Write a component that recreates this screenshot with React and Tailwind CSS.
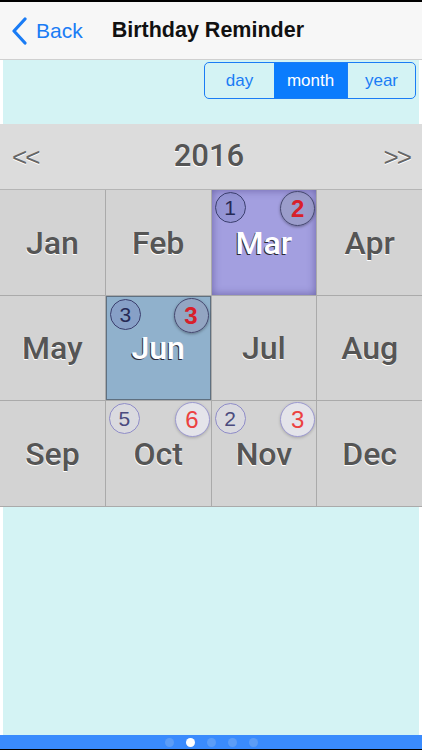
import React from "react";

const months = ["Jan","Feb","Mar","Apr","May","Jun","Jul","Aug","Sep","Oct","Nov","Dec"];
const badges = {
  Mar: { l: "1", r: "2", dark: true },
  Jun: { l: "3", r: "3", dark: true },
  Oct: { l: "5", r: "6", dark: false },
  Nov: { l: "2", r: "3", dark: false },
};

function Badge({ n, side, dark }) {
  if (side === "l") {
    return (
      <div
        className={
          "absolute left-[3px] top-[2px] w-[31px] h-[31px] rounded-full flex items-center justify-center text-[21px] leading-none " +
          (dark
            ? "border-[1.5px] border-[#3b3f6e] bg-[rgba(120,130,190,0.35)] text-[#262a56] font-medium"
            : "border border-[#8f8cc8] bg-[#dadadf] text-[#4b4b7e]")
        }
      >
        {n}
      </div>
    );
  }
  return (
    <div
      className={
        "absolute right-[1px] top-[1px] w-[35px] h-[35px] rounded-full flex items-center justify-center text-[24px] leading-none " +
        (dark
          ? "border-[1.5px] border-[#44476e] bg-[rgba(150,155,185,0.55)] text-[#d8202a] font-bold shadow-[0_1px_3px_rgba(0,0,0,0.35)]"
          : "border border-[#9d9ad0] bg-[#e4e4ea] text-[#ec4141] shadow-[0_1px_3px_rgba(0,0,0,0.2)]")
      }
    >
      {n}
    </div>
  );
}

function Cell({ m }) {
  const b = badges[m];
  let cls = "relative flex items-center justify-center ";
  let txt = "text-[#555555] [text-shadow:-0.5px_1px_0_#ffffff]";
  if (m === "Mar") {
    cls += "bg-[#a39fe0] shadow-[inset_0_0_8px_rgba(60,50,120,0.55)]";
    txt = "text-white [text-shadow:-1px_1px_0_#2a2a3a]";
  } else if (m === "Jun") {
    cls += "bg-[#90b1cc] border border-[#5f7080]";
    txt = "text-white [text-shadow:-1px_1px_0_#2a2a3a]";
  } else {
    cls += "bg-[#d3d3d3]";
  }
  return (
    <div className={cls}>
      <span
        className={"text-[32px] font-medium " + txt}
        style={{ fontFamily: 'Roboto, "Liberation Sans", sans-serif' }}
      >
        {m}
      </span>
      {b && <Badge n={b.l} side="l" dark={b.dark} />}
      {b && <Badge n={b.r} side="r" dark={b.dark} />}
    </div>
  );
}

export default function App() {
  return (
    <div
      className="w-[422px] h-[750px] bg-white flex flex-col overflow-hidden"
      style={{ fontFamily: '"Liberation Sans", Arial, sans-serif' }}
    >
      <div className="h-[2px] bg-black shrink-0" />
      <div className="h-[58px] shrink-0 bg-[#f7f7f7] border-b border-[#d0d0d0] flex items-center">
        <svg width="18" height="28" viewBox="0 0 18 28" className="ml-[11px]">
          <path d="M14 2 L3 14 L14 26" fill="none" stroke="#1a7cf5" strokeWidth="3.2" strokeLinecap="round" strokeLinejoin="round" />
        </svg>
        <span className="ml-[7px] text-[21px] text-[#1a7cf5]">Back</span>
        <span className="ml-[29px] text-[21.5px] font-bold text-[#111]">Birthday Reminder</span>
      </div>
      <div className="h-[64px] shrink-0 px-[3px]">
        <div className="h-full bg-[#d4f3f4] flex justify-end items-start pt-[2px] pr-[3px]">
          <div className="flex h-[37px] border border-[#1a7cf5] rounded-[5px] overflow-hidden text-[17px] text-[#1a7cf5]">
            <div className="w-[69px] flex items-center justify-center">day</div>
            <div className="w-[73px] flex items-center justify-center bg-[#0b7cfd] text-white">month</div>
            <div className="w-[68px] flex items-center justify-center border-l border-[#1a7cf5]">year</div>
          </div>
        </div>
      </div>
      <div className="h-[66px] shrink-0 bg-[#dcdcdc] flex items-center justify-between pl-[12px] pr-[12px] border-b border-[#b5b5b5]">
        <span className="text-[26px] text-[#666] font-light [text-shadow:0_1px_0_#fff] tracking-[-2px] mt-[2px]">&lt;&lt;</span>
        <span
          className="text-[31px] font-medium text-[#555] [text-shadow:-0.5px_1px_0_#fff] mr-[4px]"
          style={{ fontFamily: 'Roboto, "Liberation Sans", sans-serif' }}
        >
          2016
        </span>
        <span className="text-[26px] text-[#666] font-light [text-shadow:0_1px_0_#fff] tracking-[-2px] mt-[2px]">&gt;&gt;</span>
      </div>
      <div className="grid grid-cols-4 grid-rows-[105px_104px_105px] gap-px bg-[#aaaaaa] border-b border-[#aaaaaa] shrink-0 h-[317px]">
        {months.map((m) => (
          <Cell key={m} m={m} />
        ))}
      </div>
      <div className="flex-1 px-[3px]">
        <div className="h-full bg-[#d4f3f4]" />
      </div>
      <div className="h-[14px] shrink-0 bg-[#3a8bfd] flex items-center justify-center gap-[12px]">
        <div className="w-[9px] h-[9px] rounded-full bg-[#5c9df7]" />
        <div className="w-[9px] h-[9px] rounded-full bg-white" />
        <div className="w-[9px] h-[9px] rounded-full bg-[#5c9df7]" />
        <div className="w-[9px] h-[9px] rounded-full bg-[#5c9df7]" />
        <div className="w-[9px] h-[9px] rounded-full bg-[#5c9df7]" />
      </div>
      <div className="h-px bg-black shrink-0" />
    </div>
  );
}
